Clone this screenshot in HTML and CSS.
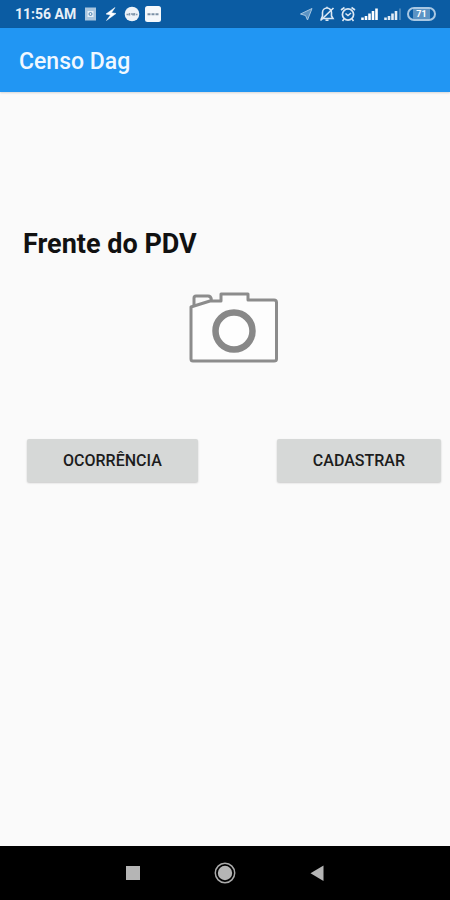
FILE: index.html
```html
<!DOCTYPE html>
<html lang="pt-BR">

<head>
    <title>Censo Dag</title>
    <meta charset="UTF-8">
    <meta name="viewport" content="width=device-width, initial-scale=1.0">
    <link rel="stylesheet" href="styles.css">
</head>

<body>
    <div class="status-bar">
        <div class="status-group">
            <span class="clock">11:56 AM</span>
            <svg class="status-icon" viewBox="0 0 16 16">
                <rect x="3" y="1.500" width="11" height="13" fill="#a9c6df"/>
                <path d="M5.500 5h6v6h-6z" fill="#e4eff8"/>
                <circle cx="8.500" cy="8" r="1.500" fill="none" stroke="#5288b5"/>
            </svg>
            <svg class="status-icon" viewBox="0 0 16 16">
                <path d="M12 1.500L3 8l4.500 1L3.500 14.500l9.500-7-4.500-.8z" fill="#fff" stroke="#fff" stroke-width=".5"/>
            </svg>
            <svg class="status-icon" viewBox="0 0 16 16">
                <circle cx="8" cy="8" r="7.300" fill="#edf3f8"/>
                <path d="M2.500 8.500h2M5.500 7v2.500M7 8h2v1.500M10.500 7v2.500M12 8.500h1.500" fill="none" stroke="#8399ad" stroke-width="1.500"/>
            </svg>
            <svg class="status-icon" viewBox="0 0 16 16">
                <rect width="16" height="16" rx="2.500" fill="#f5f8fb"/>
                <path d="M2.500 8.200h3M6.500 8.200h3M10.500 8.200h3" stroke="#7c91a6" stroke-width="2"/>
            </svg>
        </div>
        <div class="status-group">
            <svg class="status-icon" viewBox="0 0 16 16">
                <path d="M14 2.500L2.500 8l5 1.500L9.500 14z" fill="#5b93c4" stroke="#a5c6e2" stroke-linejoin="round"/>
            </svg>
            <svg class="status-icon" viewBox="0 0 16 16">
                <path d="M2.500 12.500h11.500L12.500 10V6.500a4.500 4.500 0 0 0-9 0V10zM8 .8v1.500M6.500 14.300h3" fill="none" stroke="#dbe8f4" stroke-width="1.600"/>
                <path d="M1.500 14.500L14.500 2" stroke="#dbe8f4" stroke-width="1.700"/>
            </svg>
            <svg class="status-icon" viewBox="0 0 16 16">
                <circle cx="8" cy="8.500" r="5.600" fill="none" stroke="#dbe8f4" stroke-width="1.700"/>
                <path d="M5.500 7.500L8 9.500l3-2.500M1 4l3.500-2.500M15 4l-3.500-2.500M4 13l-1.500 2M12 13l1.500 2" fill="none" stroke="#dbe8f4" stroke-width="1.600"/>
            </svg>
            <svg class="signal-icon" viewBox="0 0 18 16">
                <path d="M1.500 14v-2.500M5 14v-4M8.500 14V7.500M12 14V5M15.500 14V2.500" stroke="#fff" stroke-width="2.600"/>
            </svg>
            <svg class="signal-icon" viewBox="0 0 18 16">
                <path d="M1.500 14v-2.500M5 14v-4M8.500 14V7.500M12 14V5" stroke="#e3edf6" stroke-width="2.600"/>
                <path d="M16 14V2.500" stroke="#5d93c2" stroke-width="1.500"/>
            </svg>
            <span class="battery"><span class="battery-level">71</span></span>
        </div>
    </div>

    <header class="app-bar">
        <h1>Censo Dag</h1>
    </header>

    <main class="content">
        <h2>Frente do PDV</h2>
        <button type="button" class="camera-button" aria-label="Tirar foto">
            <svg viewBox="0 0 90 72">
                <g fill="#fdfdfd" stroke="#8c8c8c" stroke-width="3" stroke-linejoin="round">
                    <path d="M5 14l16-5h11V2h27v6h26q2.500 0 2.500 2.500V67q0 2-2.500 2H4q-2 0-2-2V15z"/>
                    <path d="M5 14V6Q5 4 7 4h12q3 0 3.500 4" fill="none"/>
                </g>
                <circle cx="45" cy="39" r="18.500" fill="#fefefe" stroke="#888" stroke-width="6.500"/>
            </svg>
        </button>
        <div class="actions">
            <button type="button" class="action-button">OCORRÊNCIA</button>
            <button type="button" class="action-button">CADASTRAR</button>
        </div>
    </main>

    <nav class="nav-bar">
        <button type="button" class="nav-button" aria-label="Recentes">
            <svg viewBox="0 0 24 24"><rect x="5" y="5" width="14" height="14" fill="#b5b5b5"/></svg>
        </button>
        <button type="button" class="nav-button" aria-label="Início">
            <svg viewBox="0 0 24 24">
                <circle cx="12" cy="12" r="9.700" fill="none" stroke="#aaa" stroke-width="1.500"/>
                <circle cx="12" cy="12" r="7.200" fill="#b5b5b5"/>
            </svg>
        </button>
        <button type="button" class="nav-button" aria-label="Voltar">
            <svg viewBox="0 0 24 24"><path d="M18.500 4.500v15.500L5.500 12.200z" fill="#b5b5b5"/></svg>
        </button>
    </nav>
</body>

</html>
```

FILE: styles.css
```css
body {
    font-family: Roboto, "Liberation Sans", sans-serif;
    margin: 0;
    min-height: 100vh;
    display: flex;
    flex-direction: column;
    background-color: #fafafa;
    color: #111;
}

h1,
h2 {
    margin: 0;
}

button {
    border: none;
    padding: 0;
    font-family: inherit;
    cursor: pointer;
}

svg {
    display: block;
}

.status-bar {
    display: flex;
    justify-content: space-between;
    align-items: center;
    height: 28px;
    padding: 0 14px 0 15px;
    background-color: #0b5ca3;
    color: #e6eff8;
}

.status-group {
    display: flex;
    align-items: center;
    gap: 5px;
}

.clock {
    font-size: 14px;
    font-weight: 700;
    margin-right: 1px;
}

.status-icon {
    width: 16px;
    height: 16px;
}

.signal-icon {
    width: 18px;
    height: 16px;
}

.battery {
    display: flex;
    align-items: center;
    justify-content: center;
    box-sizing: border-box;
    width: 29px;
    height: 14px;
    border: 2px solid #a9c8e3;
    border-radius: 7px;
}

.battery-level {
    padding: 0 3px;
    background-color: #5b93c4;
    color: #fff;
    font-size: 9px;
    font-weight: 700;
    line-height: 10px;
}

.app-bar {
    display: flex;
    align-items: center;
    height: 64px;
    padding: 0 19px;
    background-color: #2196f3;
    box-shadow: 0 1px 2px rgba(0, 0, 0, 0.15);
    color: #f0f8ff;
}

.app-bar h1 {
    padding-top: 2px;
    font-size: 23px;
    font-weight: 500;
}

.content {
    flex: 1;
    display: flex;
    flex-direction: column;
    padding: 136px 9px 24px 23px;
}

.content h2 {
    font-size: 27px;
    font-weight: 700;
    line-height: 32px;
}

.camera-button {
    align-self: center;
    margin: 32px 0 75px 4px;
    background: none;
}

.camera-button svg {
    width: 90px;
    height: 72px;
}

.actions {
    display: flex;
    justify-content: space-between;
    padding-left: 4px;
}

.action-button {
    height: 43px;
    padding: 0 36px;
    border-radius: 2px;
    background-color: #d6d8d7;
    box-shadow: 0 1px 2px rgba(0, 0, 0, 0.2);
    color: #1c1c1c;
    font-size: 16px;
    font-weight: 500;
}

.nav-bar {
    display: flex;
    align-items: center;
    justify-content: center;
    gap: 48px;
    height: 54px;
    background-color: #000;
}

.nav-button {
    display: flex;
    align-items: center;
    justify-content: center;
    width: 44px;
    height: 44px;
    background: none;
}

.nav-button svg {
    width: 24px;
    height: 24px;
}
```
